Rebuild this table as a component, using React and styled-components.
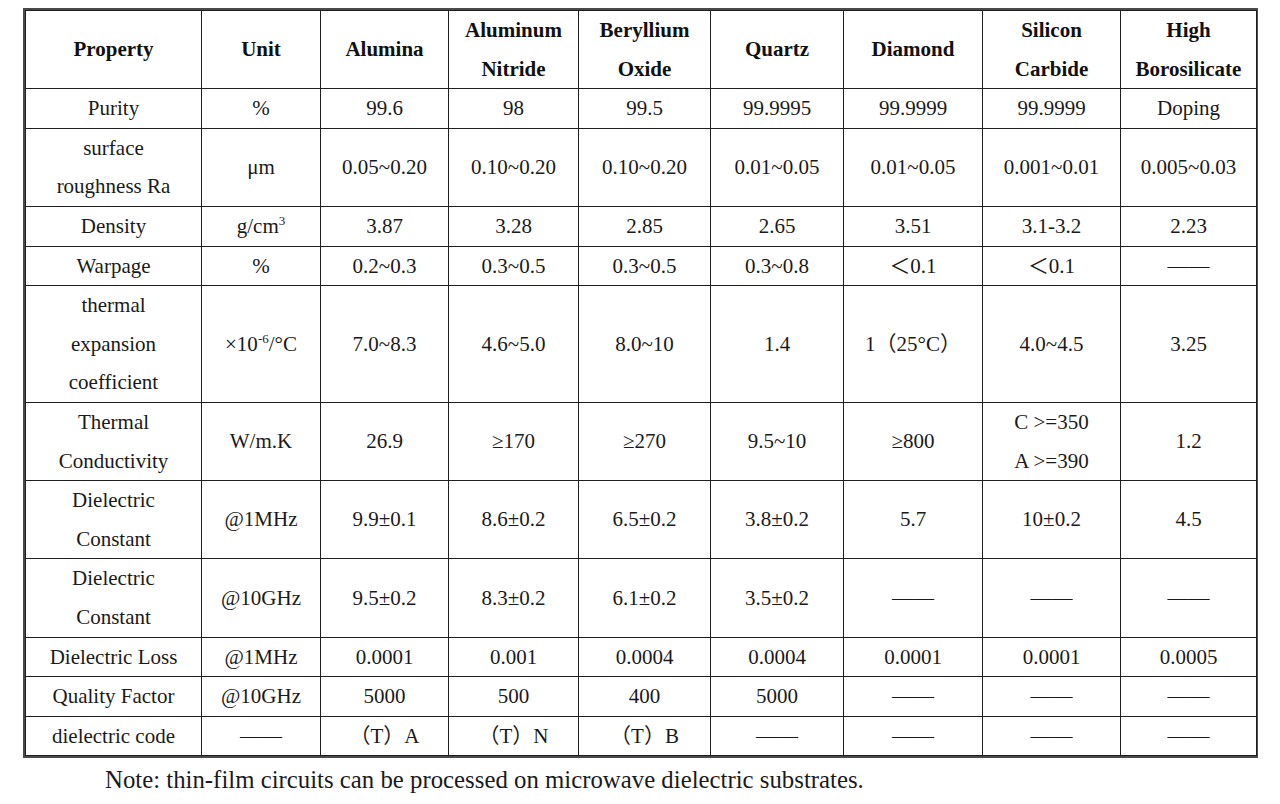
import React from "react";
import styled, { createGlobalStyle } from "styled-components";

const SERIF = `"Liberation Serif", "Noto Sans CJK SC", serif`;

const Global = createGlobalStyle`
  html, body { margin: 0; padding: 0; background: #fff; }
  body { font-family: ${SERIF}; color: #1a1a1a; }
`;

const Page = styled.div`
  padding: 8px 0 0 23px;
  width: 1235px;
  font-family: ${SERIF};
`;

const Frame = styled.div`
  border: 2px solid #4a4a4a;
  box-sizing: border-box;
  width: 1235px;
`;

const Table = styled.table`
  width: 100%;
  border-collapse: collapse;
  table-layout: fixed;
  border: 1px solid #1e1e1e;
`;

const Th = styled.th`
  border: 1px solid #1e1e1e;
  padding: 0;
  font-family: ${SERIF};
  font-size: 21px;
  font-weight: bold;
  line-height: 38.6px;
  text-align: center;
  vertical-align: middle;
  color: #111;
`;

const Td = styled.td`
  border: 1px solid #1e1e1e;
  padding: 0;
  font-family: ${SERIF};
  font-size: 21px;
  font-weight: normal;
  line-height: 38.6px;
  text-align: center;
  vertical-align: middle;
  color: #1a1a1a;
  white-space: nowrap;
`;

const Sup = styled.sup`
  font-size: 13px;
  line-height: 0;
  vertical-align: 8px;
`;

const Note = styled.p`
  margin: 7px 0 0 82px;
  font-family: ${SERIF};
  font-size: 24.8px;
  line-height: 30px;
  color: #1a1a1a;
`;

const widths = [176, 119, 128, 130, 132, 133, 139, 138, 136];

const D = "——";

const header = [
  "Property",
  "Unit",
  "Alumina",
  ["Aluminum", "Nitride"],
  ["Beryllium", "Oxide"],
  "Quartz",
  "Diamond",
  ["Silicon", "Carbide"],
  ["High", "Borosilicate"],
];

const rows = [
  ["Purity", "%", "99.6", "98", "99.5", "99.9995", "99.9999", "99.9999", "Doping"],
  [["surface", "roughness Ra"], "μm", "0.05~0.20", "0.10~0.20", "0.10~0.20", "0.01~0.05", "0.01~0.05", "0.001~0.01", "0.005~0.03"],
  ["Density", <>g/cm<Sup>3</Sup></>, "3.87", "3.28", "2.85", "2.65", "3.51", "3.1-3.2", "2.23"],
  ["Warpage", "%", "0.2~0.3", "0.3~0.5", "0.3~0.5", "0.3~0.8", "＜0.1", "＜0.1", D],
  [["thermal", "expansion", "coefficient"], <>×10<Sup>-6</Sup>/°C</>, "7.0~8.3", "4.6~5.0", "8.0~10", "1.4", "1（25°C）", "4.0~4.5", "3.25"],
  [["Thermal", "Conductivity"], "W/m.K", "26.9", "≥170", "≥270", "9.5~10", "≥800", ["C >=350", "A >=390"], "1.2"],
  [["Dielectric", "Constant"], "@1MHz", "9.9±0.1", "8.6±0.2", "6.5±0.2", "3.8±0.2", "5.7", "10±0.2", "4.5"],
  [["Dielectric", "Constant"], "@10GHz", "9.5±0.2", "8.3±0.2", "6.1±0.2", "3.5±0.2", D, D, D],
  ["Dielectric Loss", "@1MHz", "0.0001", "0.001", "0.0004", "0.0004", "0.0001", "0.0001", "0.0005"],
  ["Quality Factor", "@10GHz", "5000", "500", "400", "5000", D, D, D],
  ["dielectric code", D, "（T）A", "（T）N", "（T）B", D, D, D, D],
];

const renderContent = (c) =>
  Array.isArray(c)
    ? c.map((line, i) => (
        <React.Fragment key={i}>
          {i > 0 && <br />}
          {line}
        </React.Fragment>
      ))
    : c;

export default function App() {
  return (
    <>
      <Global />
      <Page>
        <Frame>
          <Table>
            <colgroup>
              {widths.map((w, i) => (
                <col key={i} style={{ width: w }} />
              ))}
            </colgroup>
            <thead>
              <tr>
                {header.map((h, i) => (
                  <Th key={i}>{renderContent(h)}</Th>
                ))}
              </tr>
            </thead>
            <tbody>
              {rows.map((r, ri) => (
                <tr key={ri}>
                  {r.map((c, ci) => (
                    <Td key={ci}>{renderContent(c)}</Td>
                  ))}
                </tr>
              ))}
            </tbody>
          </Table>
        </Frame>
        <Note>Note: thin-film circuits can be processed on microwave dielectric substrates.</Note>
      </Page>
    </>
  );
}
